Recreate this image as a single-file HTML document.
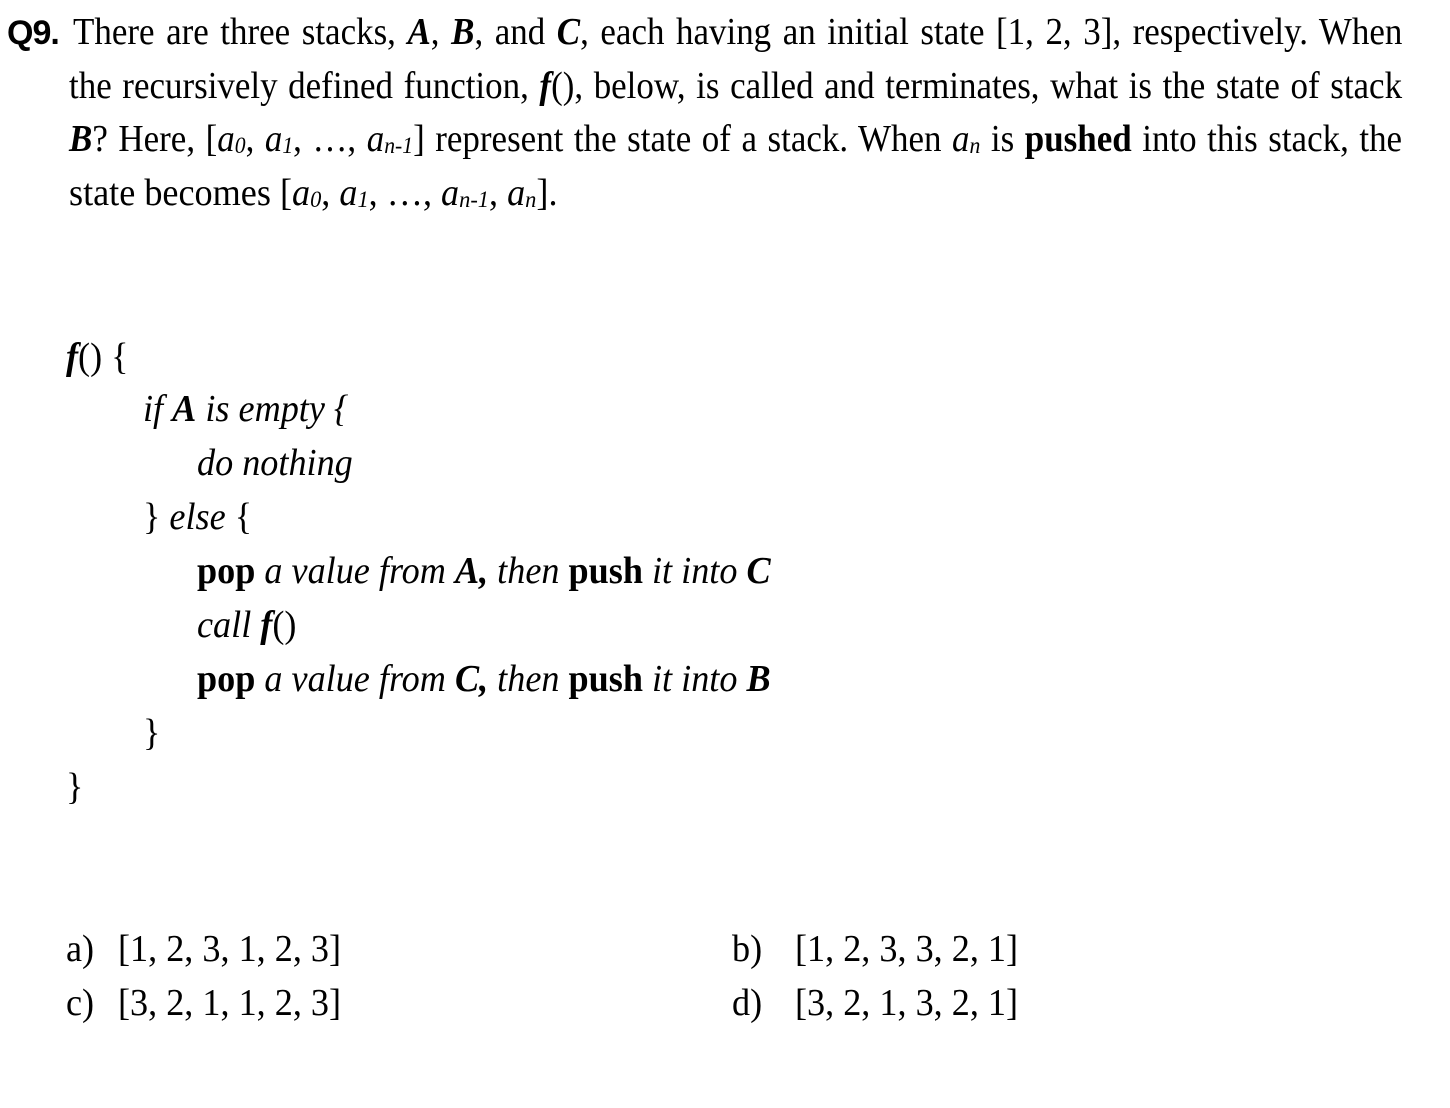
<!DOCTYPE html>
<html><head><meta charset="utf-8"><style>
html,body{margin:0;padding:0;background:#fff;width:1450px;height:1108px;overflow:hidden}
.l{position:absolute;font-family:"Liberation Serif",serif;font-size:38px;line-height:38px;color:#000;white-space:nowrap;transform-origin:0 0;transform:scaleX(0.952)}
.j{text-align:justify;text-align-last:justify;white-space:normal;word-spacing:-3px;transform:scaleX(0.92)}
sub{font-size:0.62em;vertical-align:-0.08em;line-height:0}
.q{position:absolute;left:7px;top:14px;font-family:"Liberation Sans",sans-serif;font-weight:bold;font-size:34px;line-height:38px;letter-spacing:-1px}
</style></head><body>
<div class="q">Q9.</div>
<div class="l j" style="left:73px;top:13px;width:1445px">There are three stacks, <b><i>A</i></b>, <b><i>B</i></b>, and <b><i>C</i></b>, each having an initial state [1, 2, 3], respectively. When</div>
<div class="l j" style="left:69px;top:67px;width:1449px">the recursively defined function, <b><i>f</i></b>(), below, is called and terminates, what is the state of stack</div>
<div class="l j" style="left:69px;top:120px;width:1449px"><b><i>B</i></b>? Here, [<i>a<sub>0</sub></i>, <i>a<sub>1</sub></i>, …, <i>a<sub>n-1</sub></i>] represent the state of a stack. When <i>a<sub>n</sub></i> is <b>pushed</b> into this stack, the</div>
<div class="l" style="left:69px;top:174px">state becomes [<i>a<sub>0</sub></i>, <i>a<sub>1</sub></i>, …, <i>a<sub>n-1</sub></i>, <i>a<sub>n</sub></i>].</div>

<div class="l" style="left:66px;top:338px"><b><i>f</i></b>() {</div>
<div class="l" style="left:143px;top:390px"><i>if <b>A</b> is empty {</i></div>
<div class="l" style="left:197px;top:444px"><i>do nothing</i></div>
<div class="l" style="left:143px;top:498px">} <i>else</i> {</div>
<div class="l" style="left:197px;top:552px"><b>pop</b> <i>a value from <b>A,</b> then</i> <b>push</b> <i>it into <b>C</b></i></div>
<div class="l" style="left:197px;top:606px"><i>call <b>f</b></i>()</div>
<div class="l" style="left:197px;top:660px"><b>pop</b> <i>a value from <b>C,</b> then</i> <b>push</b> <i>it into <b>B</b></i></div>
<div class="l" style="left:143px;top:714px">}</div>
<div class="l" style="left:66px;top:768px">}</div>

<div class="l" style="left:66px;top:930px">a)</div>
<div class="l" style="left:118px;top:930px">[1, 2, 3, 1, 2, 3]</div>
<div class="l" style="left:66px;top:984px">c)</div>
<div class="l" style="left:118px;top:984px">[3, 2, 1, 1, 2, 3]</div>
<div class="l" style="left:732px;top:930px">b)</div>
<div class="l" style="left:795px;top:930px">[1, 2, 3, 3, 2, 1]</div>
<div class="l" style="left:732px;top:984px">d)</div>
<div class="l" style="left:795px;top:984px">[3, 2, 1, 3, 2, 1]</div>
</body></html>
